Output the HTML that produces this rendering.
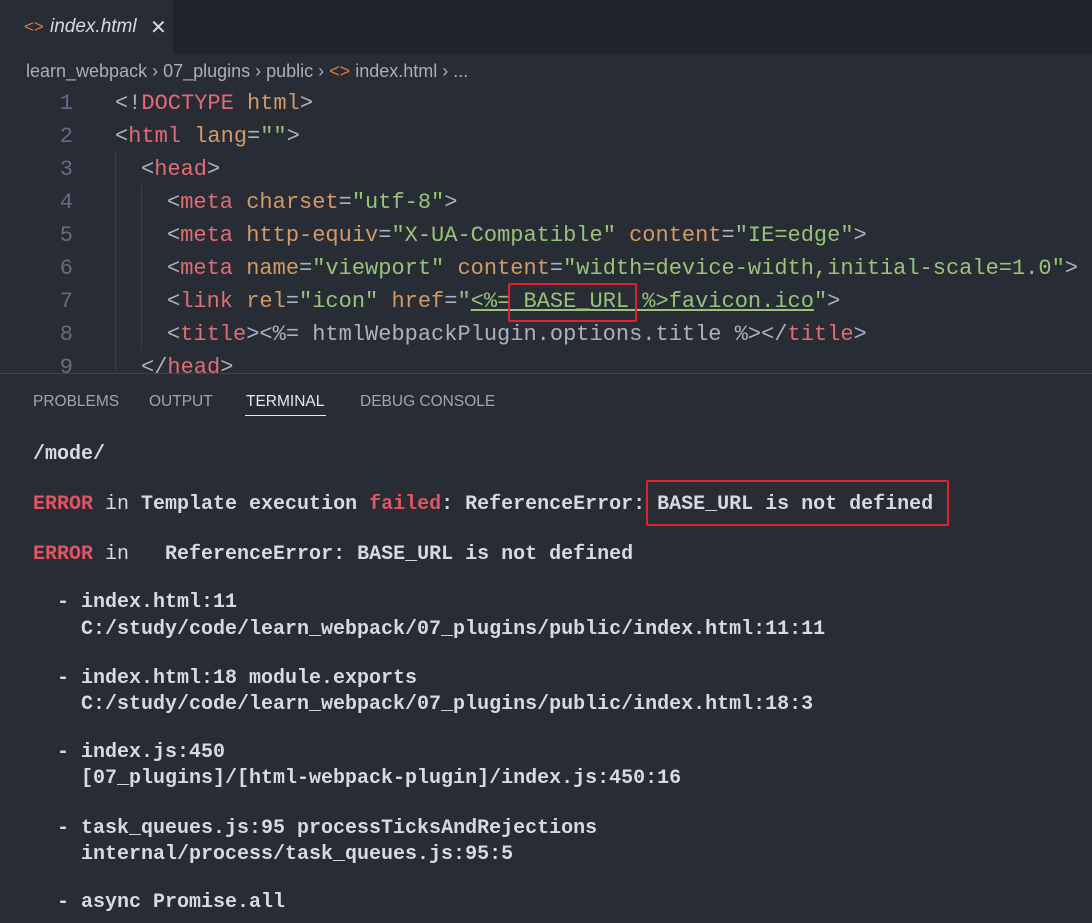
<!DOCTYPE html>
<html><head><meta charset="utf-8"><style>
body{margin:0;width:1092px;height:922px;background:#282c34;overflow:hidden;position:relative;font-family:"Liberation Sans",sans-serif}
.tabbar{position:absolute;left:0;top:0;width:1092px;height:54px;background:#21252b}
.tab{position:absolute;left:0;top:0;width:173px;height:54px;background:#282c34}
.tab span{position:absolute;top:16px;font-size:19px}
.bc{position:absolute;left:26px;top:61px;font-size:18px;color:#a9aeb8;white-space:pre}
.cl{position:absolute;left:0;height:33px;line-height:33px;font-family:"Liberation Mono",monospace;font-size:22px;white-space:pre;color:#abb2bf}
.ln{position:absolute;width:73px;text-align:right;color:#636d83}
.t{color:#e06c75}.a{color:#d19a66}.s{color:#98c379}
.panel{position:absolute;left:0;top:373px;width:1092px;height:549px;background:#282c34;border-top:1px solid #3e4451}
.pt{position:absolute;top:393px;font-size:15.5px;color:#9da5b4}
.tl{position:absolute;height:26px;line-height:26px;font-family:"Liberation Mono",monospace;font-weight:bold;font-size:20px;white-space:pre;color:#d7dae0}
.e{color:#e05561}.n{font-weight:normal}
.box{position:absolute;border:2px solid #e0222f;border-radius:2px}
</style></head><body>
<div class="tabbar"><div class="tab">
<span style="left:24px;color:#e37933;font-size:17px;top:17px">&lt;&gt;</span>
<span style="left:50px;color:#d7dae0;font-style:italic">index.html</span>
<span style="left:150px;color:#d7dae0;font-size:20px;top:15px">✕</span>
</div></div>
<div class="bc">learn_webpack › 07_plugins › public › <span style="color:#e37933">&lt;&gt;</span> index.html › ...</div>
<div style="position:absolute;left:115px;top:152px;width:1px;height:220px;background:#3b4048"></div>
<div style="position:absolute;left:141px;top:185px;width:1px;height:165px;background:#3b4048"></div>

<div class="cl" style="top:87px"><span class="ln">1</span><span style="position:absolute;left:115px">&lt;!<span class="t">DOCTYPE</span> <span class="a">html</span>&gt;</span></div>
<div class="cl" style="top:120px"><span class="ln">2</span><span style="position:absolute;left:115px">&lt;<span class="t">html</span> <span class="a">lang</span>=<span class="s">""</span>&gt;</span></div>
<div class="cl" style="top:153px"><span class="ln">3</span><span style="position:absolute;left:141px">&lt;<span class="t">head</span>&gt;</span></div>
<div class="cl" style="top:186px"><span class="ln">4</span><span style="position:absolute;left:167px">&lt;<span class="t">meta</span> <span class="a">charset</span>=<span class="s">"utf-8"</span>&gt;</span></div>
<div class="cl" style="top:219px"><span class="ln">5</span><span style="position:absolute;left:167px">&lt;<span class="t">meta</span> <span class="a">http-equiv</span>=<span class="s">"X-UA-Compatible"</span> <span class="a">content</span>=<span class="s">"IE=edge"</span>&gt;</span></div>
<div class="cl" style="top:252px"><span class="ln">6</span><span style="position:absolute;left:167px">&lt;<span class="t">meta</span> <span class="a">name</span>=<span class="s">"viewport"</span> <span class="a">content</span>=<span class="s">"width=device-width,initial-scale=1.0"</span>&gt;</span></div>
<div class="cl" style="top:285px"><span class="ln">7</span><span style="position:absolute;left:167px">&lt;<span class="t">link</span> <span class="a">rel</span>=<span class="s">"icon"</span> <span class="a">href</span>=<span class="s">"<span style="text-decoration:underline">&lt;%= BASE_URL %&gt;favicon.ico</span>"</span>&gt;</span></div>
<div class="cl" style="top:318px"><span class="ln">8</span><span style="position:absolute;left:167px">&lt;<span class="t">title</span>&gt;&lt;%= htmlWebpackPlugin.options.title %&gt;&lt;/<span class="t">title</span>&gt;</span></div>
<div class="cl" style="top:351px"><span class="ln">9</span><span style="position:absolute;left:141px">&lt;/<span class="t">head</span>&gt;</span></div>
<div class="box" style="left:508px;top:283px;width:125px;height:35px"></div>

<div class="panel"></div>
<div class="pt" style="left:33px">PROBLEMS</div>
<div class="pt" style="left:149px">OUTPUT</div>
<div class="pt" style="left:246px;color:#e6e8ec">TERMINAL</div>
<div style="position:absolute;left:245px;top:415px;width:81px;height:1px;background:#e6e8ec"></div>
<div class="pt" style="left:360px">DEBUG CONSOLE</div>

<div class="tl" style="left:33px;top:442px">/mode/</div>
<div class="tl" style="left:33px;top:492px"><span class="e">ERROR</span><span class="n"> in</span> Template execution <span class="e">failed</span>: ReferenceError: BASE_URL is not defined</div>
<div class="box" style="left:646px;top:480px;width:299px;height:42px"></div>
<div class="tl" style="left:33px;top:542px"><span class="e">ERROR</span><span class="n"> in</span>   ReferenceError: BASE_URL is not defined</div>
<div class="tl" style="left:57px;top:590px">- index.html:11</div>
<div class="tl" style="left:81px;top:617px">C:/study/code/learn_webpack/07_plugins/public/index.html:11:11</div>
<div class="tl" style="left:57px;top:666px">- index.html:18 module.exports</div>
<div class="tl" style="left:81px;top:692px">C:/study/code/learn_webpack/07_plugins/public/index.html:18:3</div>
<div class="tl" style="left:57px;top:740px">- index.js:450</div>
<div class="tl" style="left:81px;top:766px">[07_plugins]/[html-webpack-plugin]/index.js:450:16</div>
<div class="tl" style="left:57px;top:816px">- task_queues.js:95 processTicksAndRejections</div>
<div class="tl" style="left:81px;top:842px">internal/process/task_queues.js:95:5</div>
<div class="tl" style="left:57px;top:890px">- async Promise.all</div>
</body></html>
